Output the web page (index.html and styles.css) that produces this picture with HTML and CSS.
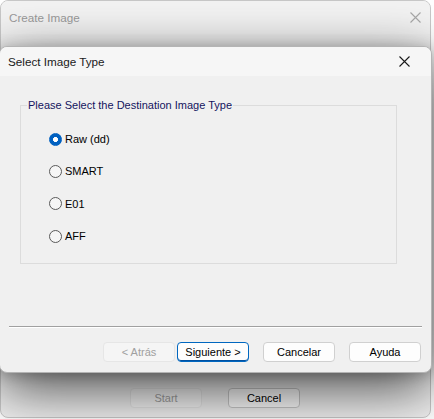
FILE: index.html
```html
<!DOCTYPE html>
<html>
<head>
<meta charset="utf-8">
<link rel="stylesheet" href="styles.css">
</head>
<body>
<div class="desktop">
  <div class="back-window">
    <div class="back-title">
      <span class="back-title-text">Create Image</span>
      <svg class="back-close" width="11" height="11" viewBox="0 0 11 11"><path d="M0.5 0.5L10.5 10.5M10.5 0.5L0.5 10.5" stroke="#a8a8a8" stroke-width="1.1" fill="none"/></svg>
    </div>
    <div class="back-body"></div>
    <div class="back-buttons">
      <div class="btn btn-disabled">Start</div>
      <div class="btn btn-back">Cancel</div>
    </div>
  </div>

  <div class="dialog">
    <div class="dialog-title">
      <span class="dialog-title-text">Select Image Type</span>
      <svg class="dialog-close" width="11" height="11" viewBox="0 0 11 11"><path d="M0.5 0.5L10.5 10.5M10.5 0.5L0.5 10.5" stroke="#1a1a1a" stroke-width="1.1" fill="none"/></svg>
    </div>
    <div class="dialog-body">
      <fieldset class="group">
        <legend class="group-legend">Please Select the Destination Image Type</legend>
        <div class="radio-list">
          <div class="radio-row"><span class="radio radio-on"></span><span class="radio-label">Raw (dd)</span></div>
          <div class="radio-row"><span class="radio"></span><span class="radio-label">SMART</span></div>
          <div class="radio-row"><span class="radio"></span><span class="radio-label">E01</span></div>
          <div class="radio-row"><span class="radio"></span><span class="radio-label">AFF</span></div>
        </div>
      </fieldset>
      <div class="separator"></div>
      <div class="button-row">
        <div class="btn btn-disabled">&lt; Atrás</div>
        <div class="btn btn-default">Siguiente &gt;</div>
        <div class="btn btn-gap">Cancelar</div>
        <div class="btn btn-gap">Ayuda</div>
      </div>
    </div>
  </div>
</div>
</body>
</html>
```

FILE: styles.css
```css
html, body {
  margin: 0;
  padding: 0;
  background: #ffffff;
  overflow: hidden;
}
body {
  width: 434px;
  height: 419px;
  font-family: "Liberation Sans", Arial, sans-serif;
  font-size: 11px;
  color: #000;
}
.desktop {
  position: relative;
  width: 434px;
  height: 419px;
}
.back-window {
  width: 429px;
  height: 416px;
  border: 1px solid #c8c8c8;
  border-radius: 8px;
  background: #f0f0f0;
  display: flex;
  flex-direction: column;
  overflow: hidden;
}
.back-title {
  height: 33px;
  flex: none;
  background: #f3f3f3;
  display: flex;
  align-items: center;
  justify-content: space-between;
  padding: 0 9px 0 8px;
}
.back-title-text {
  font-size: 11.7px;
  color: #9a9a9a;
}
.back-close {
  display: block;
  margin-top: -1px;
}
.back-body {
  flex: 1;
}
.back-buttons {
  flex: none;
  display: flex;
  justify-content: center;
  gap: 26px;
  padding: 0 0 9px 0;
  margin-left: -1px;
}
.dialog {
  position: absolute;
  left: -1px;
  top: 46px;
  width: 431px;
  height: 325px;
  border: 1px solid #b4b4b4;
  border-radius: 8px;
  background: #f0f0f0;
  box-shadow: 0 16px 56px rgba(0, 0, 0, 0.7), 0 2px 14px rgba(0, 0, 0, 0.2);
  display: flex;
  flex-direction: column;
  overflow: hidden;
}
.dialog-title {
  height: 29px;
  flex: none;
  background: #f6f6f6;
  display: flex;
  align-items: center;
  justify-content: space-between;
  padding: 0 21px 0 8px;
}
.dialog-title-text {
  font-size: 11.7px;
  color: #1a1a1a;
}
.dialog-close {
  display: block;
}
.dialog-body {
  flex: 1;
  display: flex;
  flex-direction: column;
}
.group {
  margin: 23px 0 0 20px;
  padding: 0;
  width: 377px;
  height: 165px;
  box-sizing: border-box;
  border: 1px solid #dcdcdc;
  min-inline-size: 0;
}
.group-legend {
  margin-left: 6px;
  padding: 0 1px;
  line-height: 13px;
  color: #14145e;
}
.radio-list {
  display: flex;
  flex-direction: column;
  gap: 16.4px;
  padding: 19px 0 0 28px;
}
.radio-row {
  height: 16px;
  display: flex;
  align-items: center;
  gap: 3px;
}
.radio {
  width: 11px;
  height: 11px;
  border: 1px solid #5a5a5a;
  border-radius: 50%;
  background: #f6f6f6;
  box-sizing: content-box;
  flex: none;
}
.radio-on {
  border-color: #0060c0;
  background: radial-gradient(circle, #ffffff 0 2.2px, #0060c0 2.8px);
}
.radio-label {
  line-height: 16px;
}
.separator {
  margin: 62px 0 0 9px;
  width: 413px;
  height: 1px;
  background: #a0a0a0;
  border-bottom: 1px solid #ffffff;
}
.button-row {
  display: flex;
  justify-content: flex-end;
  padding: 0 10px 0 0;
  margin-top: 14px;
}
.btn {
  width: 72px;
  height: 20px;
  box-sizing: border-box;
  border: 1px solid #d0d0d0;
  border-radius: 4px;
  background: #fdfdfd;
  display: flex;
  align-items: center;
  justify-content: center;
  font-size: 11px;
  color: #000;
}
.btn-disabled {
  background: #f5f5f5;
  border-color: #e6e6e6;
  color: #a0a0a0;
}
.btn-default {
  margin-left: 2px;
  border-color: #0067c0;
  box-shadow: inset 0 -1px 0 #0050a0;
}
.btn-gap {
  margin-left: 14px;
}
.btn-back {
  border-color: #c8c8c8;
}
```
